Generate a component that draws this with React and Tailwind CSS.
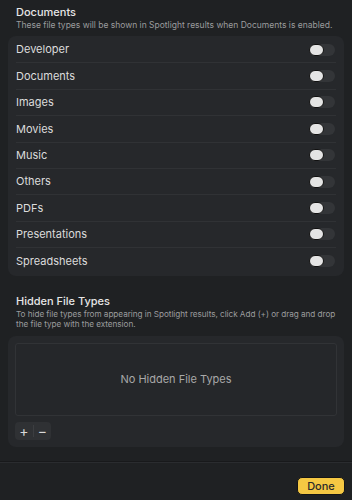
const types = [
  'Developer',
  'Documents',
  'Images',
  'Movies',
  'Music',
  'Others',
  'PDFs',
  'Presentations',
  'Spreadsheets',
]

function Toggle() {
  return (
    <div className="flex h-[12px] w-[26px] items-center rounded-full bg-[#333538]">
      <div className="h-[12px] w-[15px] rounded-full border border-[#111] bg-[#e4e4e4]" />
    </div>
  )
}

export default function App() {
  return (
    <div
      className="flex h-[500px] w-[352px] flex-col bg-[#1f2123] text-[#dedede]"
      style={{ fontFamily: 'Inter, "Noto Sans", sans-serif' }}
    >
      <div className="px-4 pt-[5px]">
        <h2 className="text-[11px] leading-[14px] font-medium text-[#e6e6e6]">
          Documents
        </h2>
        <p className="mt-[1px] text-[8.5px] leading-[11px] text-[#9b9c9e]">
          These file types will be shown in Spotlight results when Documents is
          enabled.
        </p>
      </div>

      <div className="mx-2 mt-[5px] rounded-[8px] bg-[#26282b] px-2 py-px">
        {types.map((t, i) => (
          <div
            key={t}
            className={`flex h-[26.4px] items-center justify-between pr-px ${
              i < types.length - 1 ? 'border-b border-[#303235]' : ''
            }`}
          >
            <span className="text-[11px] text-[#dcdcdc]">{t}</span>
            <Toggle />
          </div>
        ))}
      </div>

      <div className="px-4 pt-[18px]">
        <h2 className="text-[11px] leading-[14px] font-medium text-[#e6e6e6]">
          Hidden File Types
        </h2>
        <p className="mt-[1px] text-[8.2px] leading-[10.5px] tracking-[-0.05px] text-[#9b9c9e]">
          To hide file types from appearing in Spotlight results, click Add (+)
          or drag and drop the file type with the extension.
        </p>
      </div>

      <div className="mx-2 mt-[6px] rounded-[8px] bg-[#26282b] px-[7px] pt-[7px] pb-[7px]">
        <div className="flex h-[73px] items-center justify-center rounded-[3px] border border-[#313336] bg-[#25272a]">
          <span className="text-[11px] text-[#a8a8a8]">No Hidden File Types</span>
        </div>
        <div className="mt-[6px] flex h-[18px] w-[36px] items-center rounded-[4px] bg-[#2f3134] text-[#d8d8d8]">
          <span className="flex w-[18px] justify-center text-[14px] leading-none">+</span>
          <span className="h-[12px] w-px bg-[#3c3e41]" />
          <span className="flex w-[17px] justify-center text-[14px] leading-none">−</span>
        </div>
      </div>

      <div className="mt-auto border-t border-[#18191b]">
        <div className="border-t border-[#2a2c2f]" />
        <div className="flex justify-end px-[7px] pt-[14px] pb-[5px]">
          <button className="h-[18px] w-[48px] rounded-[5px] border border-[#151515] bg-[#f5c843] text-[11px] font-medium text-[#2a2a2a]">
            Done
          </button>
        </div>
      </div>
    </div>
  )
}
